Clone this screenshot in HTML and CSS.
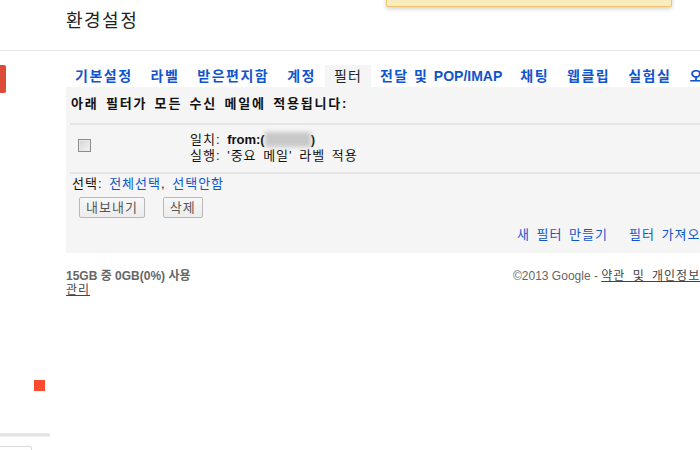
FILE: index.html
```html
<!DOCTYPE html>
<html lang="ko">
<head>
<meta charset="utf-8">
<title>환경설정</title>
<link rel="stylesheet" href="styles.css">
</head>
<body>
<div class="notice"></div>
<header class="topbar">
  <h1 class="title">환경설정</h1>
</header>
<div class="layout">
  <aside class="side">
    <div class="compose-tab"></div>
    <div class="chat-dot"></div>
    <div class="side-rule"></div>
    <div class="side-box"></div>
  </aside>
  <main class="content">
    <nav class="tabs">
      <a class="tab">기본설정</a>
      <a class="tab">라벨</a>
      <a class="tab">받은편지함</a>
      <a class="tab">계정</a>
      <span class="tab tab-active">필터</span>
      <a class="tab">전달 및 <span class="latin">POP/IMAP</span></a>
      <a class="tab">채팅</a>
      <a class="tab">웹클립</a>
      <a class="tab">실험실</a>
      <a class="tab">오프라인</a>
      <a class="tab">테마</a>
    </nav>
    <section class="panel">
      <div class="panel-head">아래 필터가 모든 수신 메일에 적용됩니다:</div>
      <div class="filter-list">
        <div class="filter-row">
          <div class="check-cell"><span class="check"></span></div>
          <div class="filter-desc">
            <div>일치: <b class="latin">from:(</b><span class="redact"></span><b class="latin">)</b></div>
            <div>실행: '중요 메일' 라벨 적용</div>
          </div>
        </div>
      </div>
      <div class="select-row">선택: <a class="link">전체선택</a>, <a class="link">선택안함</a></div>
      <div class="btns">
        <button class="btn">내보내기</button>
        <button class="btn">삭제</button>
      </div>
      <div class="links">
        <a class="link">새 필터 만들기</a>
        <a class="link">필터 가져오기</a>
      </div>
    </section>
    <footer class="footer">
      <div class="quota">
        <div class="quota-text">15GB 중 0GB(0%) 사용</div>
        <a class="manage">관리</a>
      </div>
      <div class="legal">©2013 Google - <a class="legal-link">약관 및 개인정보 보호</a> - 도움말</div>
    </footer>
  </main>
</div>
</body>
</html>
```
FILE: styles.css
```css
html, body {
  margin: 0;
  padding: 0;
  background: #fff;
  overflow: hidden;
}
body {
  width: 700px;
  height: 450px;
  position: relative;
  font-family: "Liberation Sans", "Noto Sans CJK KR", sans-serif;
  font-size: 13px;
  letter-spacing: 1px;
  word-spacing: 2px;
  color: #222;
}
.notice {
  position: absolute;
  left: 386px;
  top: -20px;
  width: 284px;
  height: 25px;
  background: #f9edbe;
  border: 1px solid #f0c36d;
  border-radius: 2px;
  box-shadow: 0 2px 4px rgba(0,0,0,0.18);
}
.topbar {
  height: 50px;
  border-bottom: 1px solid #e5e5e5;
  box-sizing: content-box;
}
.title {
  margin: 0;
  padding: 10px 0 0 66px;
  font-size: 18px;
  letter-spacing: 1.5px;
  line-height: 22px;
  font-weight: normal;
  color: #222;
}
.layout {
  display: flex;
  width: 800px;
}
.side {
  width: 66px;
  flex: none;
  display: flex;
  flex-direction: column;
  padding-top: 14px;
}
.compose-tab {
  width: 6px;
  height: 28px;
  background: #dd4b39;
  border-radius: 0 2px 2px 0;
}
.chat-dot {
  width: 11px;
  height: 11px;
  margin: 287px 0 0 34px;
  background: #fb4c2f;
}
.side-rule {
  width: 50px;
  height: 3px;
  margin-top: 42px;
  background: linear-gradient(#ebebeb, #e0e0e0);
  box-shadow: 0 1px 1px rgba(0,0,0,0.06);
}
.side-box {
  width: 31px;
  height: 20px;
  margin-top: 10px;
  border: 1px solid #d8d8d8;
  border-left: none;
  border-radius: 0 2px 0 0;
  background: #fff;
}
.content {
  flex: 1;
  min-width: 0;
  padding-top: 14px;
}
.tabs {
  display: flex;
  white-space: nowrap;
  height: 22px;
}
.tab {
  padding: 0 9px;
  line-height: 22px;
  font-size: 14px;
  letter-spacing: 1.5px;
  word-spacing: 0;
  font-weight: bold;
  color: #15c;
  text-decoration: none;
}
.tab-active {
  background: #f5f5f5;
  color: #222;
  font-weight: normal;
  letter-spacing: 1.1px;
}
.latin {
  font-family: "Liberation Sans", sans-serif;
  letter-spacing: 0;
  word-spacing: 0;
}
.panel {
  background: #f5f5f5;
  padding: 0 0 10px 4px;
}
.panel-head {
  padding: 8px 0 10px 1px;
  line-height: 18px;
  font-weight: bold;
  letter-spacing: 1.8px;
  color: #111;
}
.filter-list {
  border-top: 2px solid #e5e5e5;
  border-bottom: 2px solid #e5e5e5;
}
.filter-row {
  display: grid;
  grid-template-columns: 120px 1fr;
  padding: 7px 0 8px;
  line-height: 16px;
  color: #111;
}
.check-cell {
  padding: 7px 0 0 8px;
}
.check {
  display: block;
  width: 11px;
  height: 11px;
  border: 1px solid #8e8e8e;
  background: linear-gradient(135deg, #d4d4d4, #f6f6f6);
  box-shadow: inset 0 0 0 1px #e8e8e8;
}
.filter-desc b.latin {
  font-weight: bold;
}
.redact {
  display: inline-block;
  width: 46px;
  height: 15px;
  vertical-align: -3px;
  background: #c8c8c8;
  filter: blur(2px);
}
.select-row {
  margin-top: 2px;
  padding-left: 2px;
  line-height: 16px;
  color: #111;
}
.link {
  color: #15c;
  text-decoration: none;
}
.btns {
  display: flex;
  gap: 18px;
  margin-top: 5px;
  padding-left: 9px;
}
.btn {
  height: 21px;
  padding: 0 6px;
  font-family: "Liberation Sans", "Noto Sans CJK KR", sans-serif;
  font-size: 13px;
  letter-spacing: 1px;
  color: #555;
  background: linear-gradient(#f8f8f8, #ececec);
  border: 1px solid #b9b9b9;
  border-radius: 2px;
  line-height: 19px;
}
.links {
  display: flex;
  gap: 21px;
  margin-top: 9px;
  padding-left: 447px;
  line-height: 16px;
  white-space: nowrap;
}
.footer {
  display: grid;
  grid-template-columns: 447px auto;
  padding-top: 16px;
  font-size: 12px;
  line-height: 14px;
  letter-spacing: 0;
  word-spacing: 0;
  color: #666;
  white-space: nowrap;
}
.quota-text {
  font-weight: bold;
  color: #666;
}
.manage {
  color: #444;
  letter-spacing: 1px;
  text-decoration: underline;
}
.legal-link {
  color: #444;
  letter-spacing: 1px;
  word-spacing: 3px;
  text-decoration: underline;
}
```
